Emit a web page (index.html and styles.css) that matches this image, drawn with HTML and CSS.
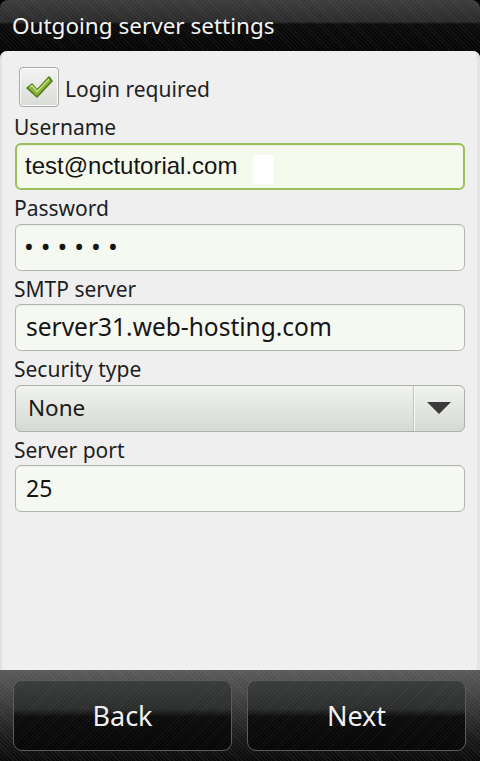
FILE: index.html
```html
<!DOCTYPE html>
<html>
<head>
<meta charset="utf-8">
<link rel="stylesheet" href="styles.css">
</head>
<body>
<div class="screen">
  <header class="titlebar">Outgoing server settings</header>
  <main class="panel">
    <div class="check-row">
      <span class="checkbox">
        <svg width="30" height="26" viewBox="0 0 30 26">
          <path d="M3 14 L8 10 L13 16 L25 3 L28 7 L13 23 Z" fill="#8bb33a" stroke="#4f7a16" stroke-width="1.5" stroke-linejoin="round"/>
          <path d="M6 13 L8 11.5 L13 17.5 L25 5" fill="none" stroke="#c6e48a" stroke-width="1.5"/>
        </svg>
      </span>
      <span class="check-label">Login required</span>
    </div>
    <div class="label">Username</div>
    <div class="input focused"><span class="arial">test@nctutorial.com</span><span class="blot"></span></div>
    <div class="label">Password</div>
    <div class="input"><span class="dots">&bull;&bull;&bull;&bull;&bull;&bull;</span></div>
    <div class="label">SMTP server</div>
    <div class="input"><span class="smtp">server31.web-hosting.com</span></div>
    <div class="label">Security type</div>
    <div class="spinner">
      <span class="spinner-value">None</span>
      <span class="spinner-arrow"><svg width="26" height="14" viewBox="0 0 26 14"><path d="M1 1 H25 L13 13 Z" fill="#3a3a3a"/></svg></span>
    </div>
    <div class="label">Server port</div>
    <div class="input"><span>25</span></div>
  </main>
  <footer class="bottombar">
    <button class="btn">Back</button>
    <button class="btn">Next</button>
  </footer>
</div>
</body>
</html>
```
FILE: styles.css
```css
* { box-sizing: border-box; }
html, body { margin: 0; padding: 0; background: #000; }
.screen {
  width: 480px; height: 761px;
  display: flex; flex-direction: column;
  font-family: "Noto Sans", "Open Sans", sans-serif;
  background: #000;
  overflow: hidden;
}
.titlebar {
  height: 51px; flex: none;
  padding: 9px 0 0 12px;
  color: #f4f4f4;
  font-size: 22.5px;
  line-height: 34px;
  background:
    repeating-linear-gradient(45deg, rgba(255,255,255,0.05) 0 1px, transparent 1px 3px),
    linear-gradient(#3c3c3c 0, #2a2a2a 22px, #0c0c0c 24px, #050505 100%);
  border-radius: 8px 8px 0 0;
}
.panel {
  flex: 1;
  background: #efefef;
  border-radius: 7px 7px 0 0;
  padding: 16px 15px 0 15px;
  box-shadow: inset 3px 0 0 -1px #e2e2e2, inset -5px 0 0 -2px #e4e4e4;
}
.check-row {
  display: flex; align-items: center;
  height: 40px;
  padding-left: 4px;
}
.checkbox {
  width: 40px; height: 40px;
  border-radius: 4px;
  border: 1px solid #a9aaa6;
  background: linear-gradient(#f4f5f2, #d9dbd6);
  box-shadow: inset 0 0 0 1px #fbfbfb;
  display: flex; align-items: center; justify-content: center;
}
.check-label {
  margin-left: 6px;
  font-size: 21px;
  color: #222;
  line-height: 40px;
  padding-top: 3px;
}
.label {
  height: 33.5px;
  font-size: 21px;
  line-height: 34px;
  color: #1e1e1e;
  margin-left: -1px;
  padding-top: 1px;
}
.check-row + .label { height: 36px; line-height: 38px; }
.input {
  height: 47px;
  border: 1px solid #b3b5b0;
  border-radius: 6px;
  background: #f6f9f2;
  display: flex; align-items: center;
  padding: 0 10px 2px 10px;
  font-size: 23px;
  color: #151515;
  position: relative;
  box-shadow: inset 0 1px 1px rgba(0,0,0,0.05);
}
.input.focused {
  border: 2px solid #9cbf5a;
  background: #f6faee;
  padding-left: 8px;
}
.arial { font-family: "Liberation Sans", Arial, sans-serif; font-size: 24px; }
.smtp { font-size: 24.5px; padding-left: 0px; }
.blot {
  position: absolute; left: 236px; top: 10px;
  width: 21px; height: 29px;
  background: #ffffff;
}
.dots { font-size: 26px; letter-spacing: 7px; margin-left: -2px; }
.spinner {
  height: 47px;
  border: 1px solid #aeb0ab;
  border-radius: 6px;
  background: linear-gradient(#f1f3ef, #e2e4df 55%, #d6d8d3);
  display: flex; align-items: stretch;
}
.spinner-value {
  flex: 1;
  display: flex; align-items: center;
  padding-left: 12px; padding-bottom: 2px;
  font-size: 22.5px; color: #1a1a1a;
  border-right: 1px solid #c2c4bf;
}
.spinner-arrow {
  width: 50px;
  display: flex; align-items: center; justify-content: center;
  box-shadow: inset 1px 0 0 #fafafa;
}
.bottombar {
  height: 91px; flex: none;
  display: flex; gap: 15px;
  padding: 10px 14px 10px 13px;
  background:
    repeating-linear-gradient(45deg, rgba(255,255,255,0.06) 0 1px, transparent 1px 3px),
    linear-gradient(#5a5a5a, #3a3a3a 40%, #1a1a1a 75%, #0a0a0a);
}
.btn {
  flex: 1;
  border: 1px solid #5a5c5a;
  border-radius: 9px;
  background:
    repeating-linear-gradient(-45deg, rgba(255,255,255,0.04) 0 1px, transparent 1px 3px),
    linear-gradient(#3a3c3b, #2c2e2d 40%, #0c0c0c 52%, #060606);
  color: #f0f0f0;
  font-family: "Noto Sans", "Open Sans", sans-serif;
  font-size: 27px;
  padding: 0 0 0 0;
}
```
